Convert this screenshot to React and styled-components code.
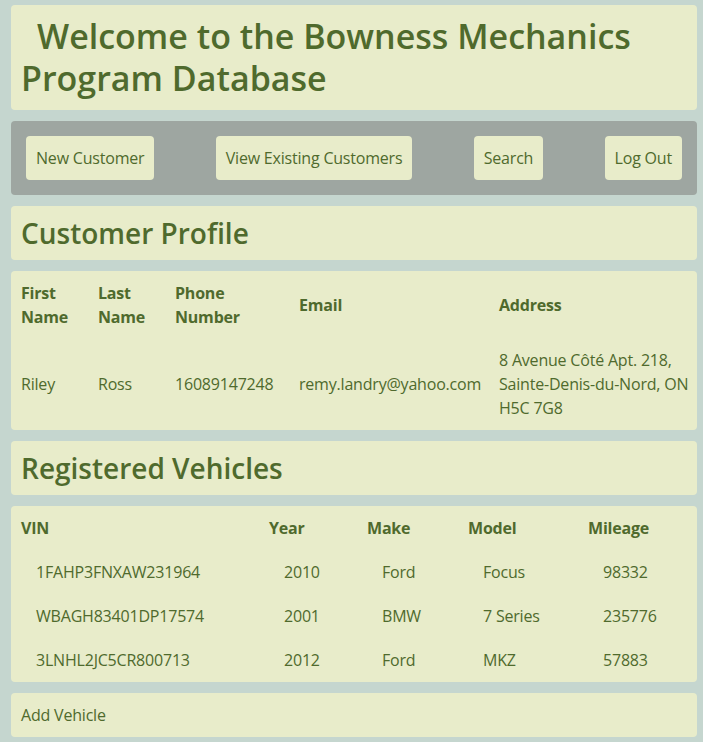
import React from 'react';
import styled, { createGlobalStyle } from 'styled-components';

const GlobalStyle = createGlobalStyle`
	body {
		margin: 0;
		background: #c5d6cf;
		font-family: "Open Sans", "Noto Sans", sans-serif;
		color: #4f6a2d;
	}
`;

const customer = {
	first: 'Riley',
	last: 'Ross',
	phone: '16089147248',
	email: 'remy.landry@yahoo.com',
	address: ['8 Avenue Côté Apt. 218,', 'Sainte-Denis-du-Nord, ON', 'H5C 7G8'],
};

const vehicles = [
	{ vin: '1FAHP3FNXAW231964', year: 2010, make: 'Ford', model: 'Focus', mileage: 98332 },
	{ vin: 'WBAGH83401DP17574', year: 2001, make: 'BMW', model: '7 Series', mileage: 235776 },
	{ vin: '3LNHL2JC5CR800713', year: 2012, make: 'Ford', model: 'MKZ', mileage: 57883 },
];

const App = () => {
	return (
		<Page>
			<GlobalStyle />
			<Card>
				<Title>Welcome to the Bowness Mechanics Program Database</Title>
			</Card>

			<NavBar>
				<NavButton>New Customer</NavButton>
				<NavButton>View Existing Customers</NavButton>
				<NavButton>Search</NavButton>
				<NavButton>Log Out</NavButton>
			</NavBar>

			<Card>
				<SectionTitle>Customer Profile</SectionTitle>
			</Card>

			<Card>
				<Table>
					<colgroup>
						<col width="77" />
						<col width="77" />
						<col width="124" />
						<col width="200" />
						<col />
					</colgroup>
					<thead>
						<tr>
							<Th>First<br />Name</Th>
							<Th>Last<br />Name</Th>
							<Th>Phone<br />Number</Th>
							<Th>Email</Th>
							<Th>Address</Th>
						</tr>
					</thead>
					<tbody>
						<tr>
							<ProfileTd>{customer.first}</ProfileTd>
							<ProfileTd>{customer.last}</ProfileTd>
							<ProfileTd>{customer.phone}</ProfileTd>
							<ProfileTd>{customer.email}</ProfileTd>
							<ProfileTd>
								{customer.address.map((line) => (
									<AddressLine key={line}>{line}</AddressLine>
								))}
							</ProfileTd>
						</tr>
					</tbody>
				</Table>
			</Card>

			<Card>
				<SectionTitle>Registered Vehicles</SectionTitle>
			</Card>

			<Card>
				<Table>
					<colgroup>
						<col width="248" />
						<col width="98" />
						<col width="101" />
						<col width="120" />
						<col />
					</colgroup>
					<thead>
						<tr>
							<Th>VIN</Th>
							<Th>Year</Th>
							<Th>Make</Th>
							<Th>Model</Th>
							<Th>Mileage</Th>
						</tr>
					</thead>
					<tbody>
						{vehicles.map((v) => (
							<tr key={v.vin}>
								<VehicleTd>{v.vin}</VehicleTd>
								<VehicleTd>{v.year}</VehicleTd>
								<VehicleTd>{v.make}</VehicleTd>
								<VehicleTd>{v.model}</VehicleTd>
								<VehicleTd>{v.mileage}</VehicleTd>
							</tr>
						))}
					</tbody>
				</Table>
			</Card>

			<Card>
				<Plain>Add Vehicle</Plain>
			</Card>
		</Page>
	);
};

const Page = styled.div`
	display: flex;
	flex-direction: column;
	gap: 11px;
	padding: 5px 6px 6px 11px;
`;

const Card = styled.div`
	background: #e8ecca;
	border-radius: 4px;
	padding: 10px;
`;

const Title = styled.h1`
	margin: 0;
	font-size: 34px;
	font-weight: 600;
	line-height: 42px;
	padding-bottom: 1px;
	text-indent: 16px;
`;

const SectionTitle = styled.h2`
	margin: 0;
	font-size: 28px;
	font-weight: 600;
	line-height: 34px;
`;

const NavBar = styled.div`
	display: flex;
	justify-content: space-between;
	align-items: center;
	background: #9ea6a1;
	border-radius: 4px;
	padding: 15px;
`;

const NavButton = styled.button`
	border: none;
	border-radius: 4px;
	background: #e8ecca;
	color: #4f6a2d;
	font-family: inherit;
	font-size: 16px;
	line-height: 24px;
	letter-spacing: -0.2px;
	padding: 10px;
	cursor: pointer;
`;

const Table = styled.table`
	width: 100%;
	border-collapse: collapse;
	table-layout: fixed;
	font-size: 16px;
	line-height: 24px;
	letter-spacing: -0.2px;
`;

const Th = styled.th`
	padding: 0;
	text-align: left;
	font-weight: 700;
	vertical-align: middle;
`;

const ProfileTd = styled.td`
	padding: 19px 0 0;
	vertical-align: middle;
`;

const AddressLine = styled.div`
	white-space: nowrap;
`;

const VehicleTd = styled.td`
	padding: 20px 0 0 15px;
	vertical-align: middle;
`;

const Plain = styled.div`
	font-size: 16px;
	line-height: 24px;
	letter-spacing: -0.2px;
`;

export default App;
